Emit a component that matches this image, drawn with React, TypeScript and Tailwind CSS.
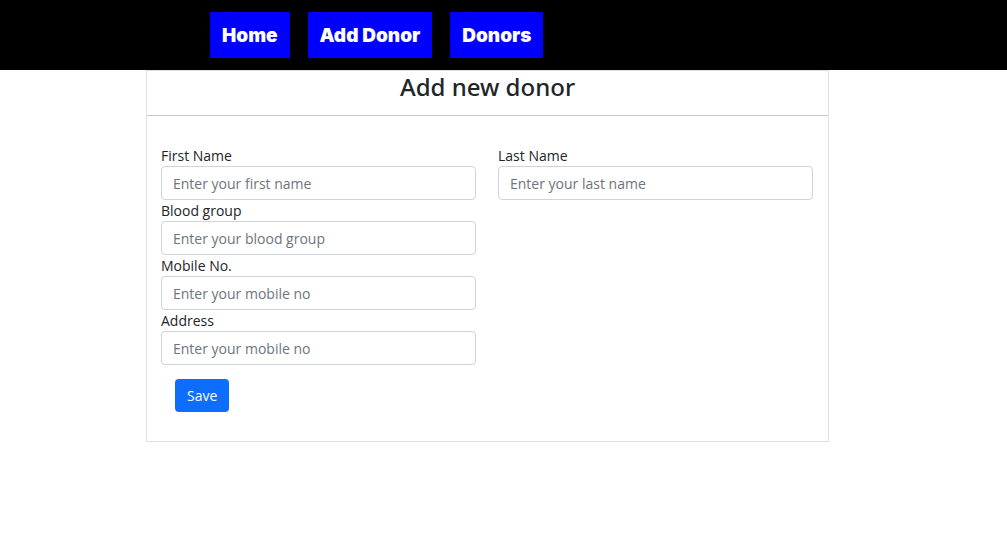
import { useId } from "react";

const navLinks = ["Home", "Add Donor", "Donors"];

function Field({ label, placeholder }: { label: string; placeholder: string }) {
  const id = useId();
  return (
    <div className="flex flex-col">
      <label htmlFor={id} className="h-[21px] text-sm leading-[21px] text-[#212529]">
        {label}
      </label>
      <input
        id={id}
        type="text"
        placeholder={placeholder}
        className="h-[34px] w-full rounded-[4px] border border-[#ced4da] bg-white px-[11px] text-sm text-[#212529] placeholder:text-[#6c757d]"
      />
    </div>
  );
}

export default function App() {
  return (
    <div className="min-h-screen bg-white font-['Open_Sans','Noto_Sans',sans-serif]">
      <nav className="flex gap-[18px] bg-black py-3 pl-[210px]">
        {navLinks.map((name) => (
          <a
            key={name}
            href="#"
            className="bg-[#0000ff] px-3 pt-[10px] pb-2 font-['Inter',sans-serif] text-[19px] leading-7 font-black text-white"
          >
            {name}
          </a>
        ))}
      </nav>
      <main className="mr-[178px] ml-[146px] border border-[#dee2e6] pb-[29px]">
        <h1 className="h-[45px] border-b border-[#c8c9ca] text-center font-['Noto_Sans',sans-serif] text-2xl leading-8 font-medium text-[#212529]">
          Add new donor
        </h1>
        <form className="pt-[29px] pr-[15px] pl-[14px]">
          <div className="grid grid-cols-2 gap-x-[22px]">
            <Field label="First Name" placeholder="Enter your first name" />
            <Field label="Last Name" placeholder="Enter your last name" />
            <Field label="Blood group" placeholder="Enter your blood group" />
            <div />
            <Field label="Mobile No." placeholder="Enter your mobile no" />
            <div />
            <Field label="Address" placeholder="Enter your mobile no" />
          </div>
          <button
            type="button"
            className="mt-[14px] ml-[14px] h-[33px] rounded-[4px] bg-[#0d6efd] px-3 text-sm text-white"
          >
            Save
          </button>
        </form>
      </main>
    </div>
  );
}
